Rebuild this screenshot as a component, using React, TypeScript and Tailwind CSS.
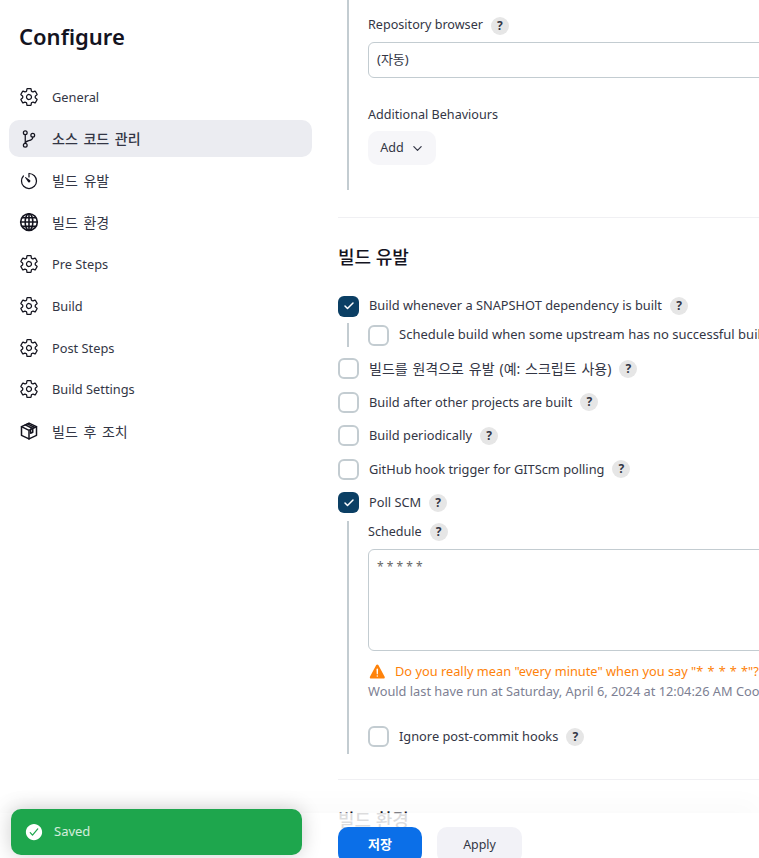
import React from 'react';
import { IoSettingsOutline, IoGitBranchOutline, IoTimerOutline, IoCheckmarkCircle, IoChevronDown, IoWarning } from 'react-icons/io5';
import { Check } from 'lucide-react';

const font = "font-['Noto_Sans','Noto_Sans_CJK_KR',sans-serif]";

// the package icon in the nav, a box with a strapped lid
const BoxIcon = ({ className }: { className?: string }) => (
    <svg viewBox="0 0 24 24" fill="none" stroke="currentColor" strokeWidth="1.8" strokeLinejoin="round" strokeLinecap="round" className={className}>
        <path d="M12 2.5 3 6.8v10.4l9 4.3 9-4.3V6.8z" />
        <path d="M3 6.8l9 4.4 9-4.4M12 11.2v10.3" />
        <path d="M7.5 4.6l9 4.4v4.5l-2.6 1.2V10M10 3.5l9 4.3" />
    </svg>
);

// denser than the io5 globe, with two meridians and two parallels
const GlobeIcon = ({ className }: { className?: string }) => (
    <svg viewBox="0 0 24 24" fill="none" stroke="currentColor" strokeWidth="1.9" className={className}>
        <circle cx="12" cy="12" r="10" />
        <ellipse cx="12" cy="12" rx="4.6" ry="10" />
        <path d="M12 2v20M2 12h20M3.6 6.8h16.8M3.6 17.2h16.8" />
    </svg>
);

const navItems = [
    { label: 'General', icon: IoSettingsOutline },
    { label: '소스 코드 관리', icon: IoGitBranchOutline, active: true, ko: true },
    { label: '빌드 유발', icon: IoTimerOutline, ko: true },
    { label: '빌드 환경', icon: GlobeIcon, ko: true },
    { label: 'Pre Steps', icon: IoSettingsOutline },
    { label: 'Build', icon: IoSettingsOutline },
    { label: 'Post Steps', icon: IoSettingsOutline },
    { label: 'Build Settings', icon: IoSettingsOutline },
    { label: '빌드 후 조치', icon: BoxIcon, ko: true },
];

const Help = () => (
    <span className="ml-[8px] flex h-[18px] w-[18px] shrink-0 items-center justify-center rounded-full bg-[#e6e6e6] text-[12px] font-bold text-[#333645]">?</span>
);

const CheckRow = ({ label, checked, help = true, className = '', textClass = 'text-[12.8px]' }: { label: string; checked?: boolean; help?: boolean; className?: string; textClass?: string }) => (
    <div className={`flex h-[22px] items-center whitespace-nowrap ${className}`}>
        {checked ? (
            <span className="flex h-[21px] w-[21px] shrink-0 items-center justify-center rounded-[6px] bg-[#0b3f64]">
                <Check className="h-[12px] w-[12px] text-white" strokeWidth={3} />
            </span>
        ) : (
            <span className="h-[21px] w-[21px] shrink-0 rounded-[6px] border-2 border-[#c3ccd1] bg-white" />
        )}
        <span className={`ml-[10px] text-[#333645] ${textClass}`}>{label}</span>
        {help && <Help />}
    </div>
);

const App: React.FC = () => {
    return (
        <div className={`relative flex h-[858px] w-[759px] overflow-hidden bg-white ${font}`}>
            {/* Sidebar */}
            <aside className="w-[330px] shrink-0 pl-[9px]">
                <h1 className="mt-[19px] ml-[10px] text-[22px] leading-[34px] font-semibold text-[#14141f]">Configure</h1>
                <nav className="mt-[25.7px] flex w-[303px] flex-col gap-[4.75px]">
                    {navItems.map((item) => {
                        const Icon = item.icon;
                        return (
                            <div
                                key={item.label}
                                className={`flex h-[37px] items-center rounded-[10px] pl-[10px] text-[#333645] ${item.ko ? 'text-[14px] [word-spacing:2px]' : 'text-[12.8px]'} ${item.active ? 'bg-[#ebecf1] font-medium text-[#14141f]' : ''}`}
                            >
                                <Icon className="h-[20px] w-[20px] text-[#14141f]" />
                                <span className={`ml-[13px] ${item.ko ? '' : 'pt-[1px]'}`}>{item.label}</span>
                            </div>
                        );
                    })}
                </nav>
            </aside>

            {/* Form */}
            <main className="min-w-0 flex-1 overflow-hidden pl-[8px]">
                <div className="ml-[9px] h-[190px] border-l-2 border-[#c3ccd1] pt-[16px] pl-[19px]">
                    <div className="flex h-[18px] items-center whitespace-nowrap pt-[1px] text-[12.6px] text-[#333645]">
                        Repository browser <Help />
                    </div>
                    <div className="mt-[8px] flex h-[36px] w-[500px] items-center rounded-[6px] border border-[#c3ccd1] pl-[8px] text-[13px] text-[#333645]">(자동)</div>
                    <div className="mt-[28px] text-[12.6px] leading-[18px] text-[#333645]">Additional Behaviours</div>
                    <div className="mt-[7px] flex h-[34px] w-[68px] items-center justify-center gap-[7px] rounded-[10px] bg-[#f6f6f9] pt-[1px] text-[12.6px] text-[#333645]">
                        Add <IoChevronDown className="h-[13px] w-[13px]" />
                    </div>
                </div>

                <div className="mt-[27px] h-px bg-[#f0f0f3]" />
                <h2 className="mt-[25px] text-[18px] leading-[28px] font-medium text-[#14141f]">빌드 유발</h2>

                <CheckRow className="mt-[24px]" label="Build whenever a SNAPSHOT dependency is built" checked />
                <div className="mt-[6px] ml-[9px] flex h-[24px] items-center border-l-2 border-[#c3ccd1] pl-[19px]">
                    <CheckRow label="Schedule build when some upstream has no successful builds" help={false} textClass="text-[13px]" />
                </div>
                <CheckRow className="mt-[10.9px]" label="빌드를 원격으로 유발 (예: 스크립트 사용)" textClass="text-[14px] [word-spacing:1.2px]" />
                <CheckRow className="mt-[11.5px]" label="Build after other projects are built" />
                <CheckRow className="mt-[11.5px]" label="Build periodically" />
                <CheckRow className="mt-[11.5px]" label="GitHub hook trigger for GITScm polling" />
                <CheckRow className="mt-[11.5px]" label="Poll SCM" checked />

                <div className="mt-[7.1px] ml-[9px] h-[233px] border-l-2 border-[#c3ccd1] pl-[19px]">
                    <div className="flex h-[20px] items-center whitespace-nowrap pt-[2px] text-[12.6px] text-[#333645]">
                        Schedule <Help />
                    </div>
                    <div className="mt-[8px] h-[102px] w-[500px] rounded-[6px] border border-[#c3ccd1] pt-[8px] pl-[8px] text-[12px] leading-[18px] text-[#666]">* * * * *</div>
                    <div className="mt-[12px] flex h-[18px] items-center whitespace-nowrap text-[12.8px] text-[#fe820a]">
                        <IoWarning className="h-[19px] w-[19px] shrink-0" />
                        <span className="ml-[8px]">Do you really mean "every minute" when you say <span className="[word-spacing:0.8px]">"* * * * *"?</span></span>
                    </div>
                    <div className="mt-[1px] h-[18px] whitespace-nowrap text-[12.8px] leading-[18px] text-[#7d7f93]">
                        Would last have run at Saturday, April 6, 2024 at 12:04:26 AM Coordinated
                    </div>
                    <CheckRow className="mt-[26px]" label="Ignore post-commit hooks" />
                </div>

                <div className="mt-[25px] h-px bg-[#f0f0f3]" />
                <h2 className="mt-[26px] text-[18px] leading-[28px] font-medium text-[#14141f]">빌드 환경</h2>
            </main>

            {/* Sticky bottom bar */}
            <div className="absolute inset-x-0 bottom-0 h-[45px] bg-white/85 pt-[14px] pl-[338px] shadow-[0_-12px_24px_rgba(0,0,0,0.02)]">
                <div className="flex gap-[15px]">
                    <div className="flex h-[36px] w-[84px] items-center justify-center rounded-[10px] bg-[#0b6fe8] text-[13px] font-semibold text-white">저장</div>
                    <div className="flex h-[36px] w-[85px] items-center justify-center rounded-[10px] bg-[#f2f2f7] text-[12.4px] text-[#333645]">Apply</div>
                </div>
            </div>

            {/* Toast */}
            <div className="absolute bottom-[3px] left-[11px] flex h-[46px] w-[291px] items-center rounded-[10px] bg-[#1ea64d] pl-[13px] text-[13px] text-white/80 shadow-[0_0_20px_rgba(0,0,0,0.2)]">
                <IoCheckmarkCircle className="h-[20px] w-[20px] text-white" />
                <span className="ml-[10px]">Saved</span>
            </div>
        </div>
    );
};

export default App;
